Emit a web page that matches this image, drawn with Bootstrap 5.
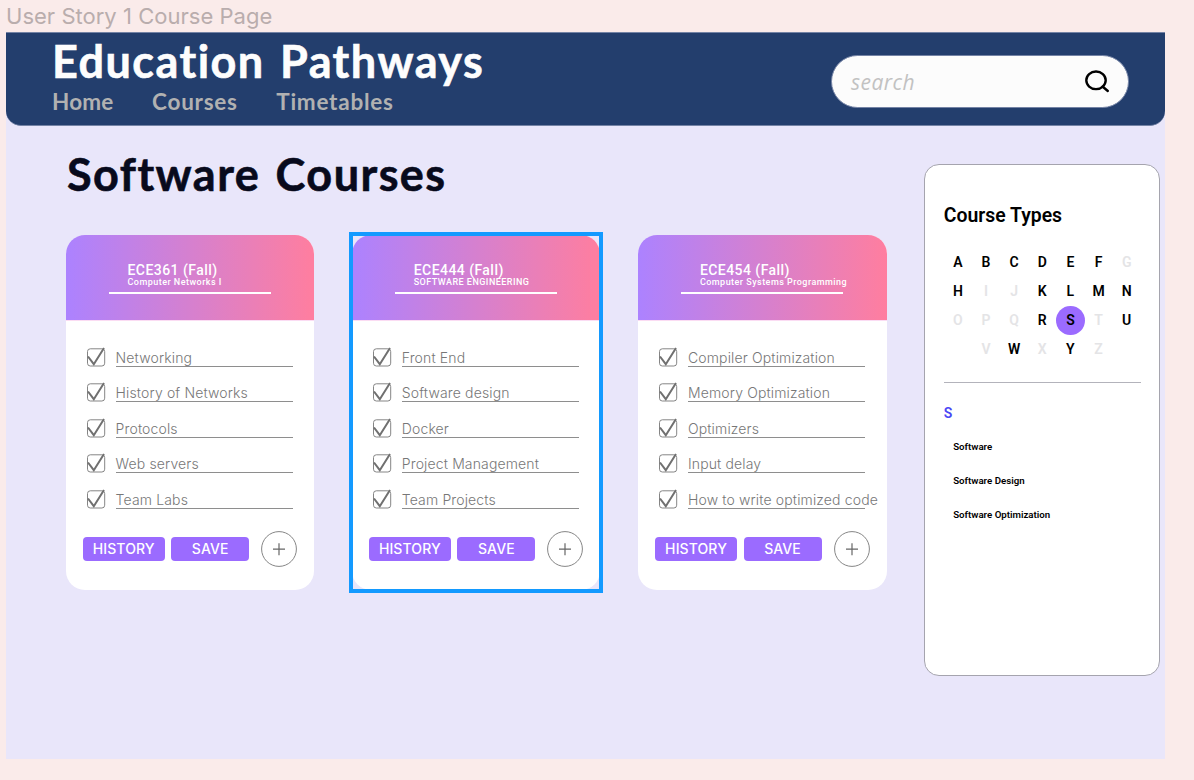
<!DOCTYPE html>
<html lang="en">
<head>
<meta charset="utf-8">
<meta name="viewport" content="width=device-width, initial-scale=1">
<title>Education Pathways</title>
<link href="https://cdn.jsdelivr.net/npm/bootstrap@5.3.0/dist/css/bootstrap.min.css" rel="stylesheet">
<style>
body{background:#faebea;font-family:Roboto,"Liberation Sans",sans-serif;height:780px;overflow:hidden;color:#000}
.frame-label{height:32px;padding-left:6px;font:400 22px/33px Inter,sans-serif;color:#b9adad;letter-spacing:.02px;white-space:nowrap}
.frame{width:1158.5px;height:727px;margin-left:6px;background:#e9e6fa}
.topbar{height:93.5px;background:#233e6d;border:1px solid #7483a5;border-width:1px 0;border-radius:0 0 15px 15px;padding:0 35.5px 0 46px}
.site-title,.page-title,.topbar .nav-link{font-family:Lato,"Noto Sans",sans-serif;font-weight:700;white-space:nowrap}
.site-title,.page-title{font-size:45px;letter-spacing:1.45px;word-spacing:3px;-webkit-text-stroke:.6px currentColor}
.site-title{line-height:55px;color:#fdfdfd;margin:1px 0 0}
.topbar .nav{gap:38.5px}
.topbar .nav-link{font-size:22.5px;line-height:26px;color:#b1b1b1;padding:0;letter-spacing:.75px}
.topbar .nav-link:first-child{letter-spacing:.2px}
.search{width:298px;height:53px;background:#fcfcfc;border:1px solid #7483a5;border-radius:27px;padding:0 18px 0 19px;margin-top:22px}
.search span{font:italic 400 21px/28px "Open Sans",sans-serif;color:#c2c2c2;letter-spacing:.45px}
.page-title{line-height:58px;color:#080a1c;margin:19px 0 32.5px 1px}
.content{padding-left:60px;gap:38px}
.cards{gap:38px}
.course{width:248.2px;height:355px;border-radius:19px;background:#fff;position:relative}
.course.selected::after{content:"";position:absolute;inset:-3px;border:4px solid #139aff}
.course-head{height:85.5px;border-radius:19px 19px 0 0;background:linear-gradient(90deg,#ac82ff,#ff7e9f);color:#fff;padding:27px 0 0 43px;border-bottom:1px solid #fbdcf3}
.course-head h2{font-size:14px;line-height:16px;font-weight:500;letter-spacing:.45px;margin:0 0 0 18.5px;white-space:nowrap}
.course-head p{font-size:9px;line-height:9px;font-weight:500;letter-spacing:.47px;margin:0 0 0 18.5px;white-space:nowrap}
.rule{width:162px;height:2px;background:#fff;margin-top:5px}
.checks{padding:21px 21px 0;margin:0;list-style:none}
.checks li{height:35.6px;display:flex;align-items:flex-start;gap:8.6px}
.checks svg{flex:none;margin-top:5px}
.checks span{width:177.5px;height:25px;border-bottom:1px solid #8e8e8e;font:300 14px/32px Inter,sans-serif;letter-spacing:.14px;color:#777;white-space:nowrap}
.actions{padding:11.5px 17px 0 16.7px}
.btn-act{height:24px;padding:0;border:0;border-radius:4px;background:#9b6bff;color:#fff;font:500 14px/24px Inter,sans-serif;letter-spacing:.1px}
.btn-hist{width:82px}.btn-save{width:78px;margin-left:6.5px}
.plus{margin-left:12px}
.types{width:236px;height:512px;margin-top:38.5px;margin-left:-.4px;border:1px solid #a5a4ae;border-radius:15px;background:#fff;padding:39.5px 18px 0}
.types h2{font-size:19.4px;line-height:22px;font-weight:600;margin:0 0 21.5px .6px}
.letters{display:grid;grid-template-columns:repeat(7,28.15px);grid-auto-rows:29px;font-size:14px;line-height:29px;text-align:center;margin-left:.6px}
.letters b{font-weight:600}
.letters i{font-style:normal;font-weight:600;color:#e4e4e6}
.letters .on{background:#9b6bff;border-radius:50%;width:28.5px;height:29px}
.divider{height:1px;background:#b3b3bb;margin:18px 0 20px 1px;width:197px}
.types h3{font-size:14px;line-height:20px;font-weight:600;color:#4a46f5;margin:0 0 7px .6px}
.types ul{font-size:9.7px;font-weight:600;line-height:34.2px;margin:0;padding-left:10px;list-style:none}
</style>
</head>
<body>
<svg width="0" height="0" class="d-none">
<symbol id="check" viewBox="0 0 20 20"><rect x=".5" y="1.8" width="17.2" height="17.2" rx="2.8" fill="none" stroke="#858585" stroke-width="1"/><path d="M1 9.5 6.8 17.2 17 1" fill="none" stroke="#707070" stroke-width="2"/></symbol>
<symbol id="plus" viewBox="0 0 36 36"><circle cx="18" cy="18" r="17.4" fill="none" stroke="#777" stroke-width=".9"/><path d="M12 18.2h12M18 12.2v12" stroke="#666" stroke-width="1.2"/></symbol>
</svg>
<div class="frame-label">User Story 1 Course Page</div>
<div class="frame">
<header class="topbar d-flex justify-content-between align-items-start">
<div><h1 class="site-title">Education Pathways</h1>
<nav class="nav"><a class="nav-link" href="#">Home</a><a class="nav-link" href="#">Courses</a><a class="nav-link" href="#">Timetables</a></nav></div>
<div class="search d-flex align-items-center justify-content-between"><span>search</span>
<svg width="26" height="24" viewBox="0 0 26 24" fill="none" stroke="#000" stroke-width="2.4"><ellipse cx="12" cy="10.3" rx="9.7" ry="8.8"/><path d="m18.5 16.5 5.3 4.5" stroke-linecap="round"/></svg></div>
</header>
<div class="content d-flex align-items-start">
<main>
<h1 class="page-title">Software Courses</h1>
<div class="cards d-flex">
<section class="course"><div class="course-head"><h2>ECE361 (Fall)</h2><p>Computer Networks I</p><div class="rule"></div></div>
<ul class="checks"><li><svg width="20" height="20"><use href="#check"/></svg><span>Networking</span></li><li><svg width="20" height="20"><use href="#check"/></svg><span>History of Networks</span></li><li><svg width="20" height="20"><use href="#check"/></svg><span>Protocols</span></li><li><svg width="20" height="20"><use href="#check"/></svg><span>Web servers</span></li><li><svg width="20" height="20"><use href="#check"/></svg><span>Team Labs</span></li></ul>
<div class="actions d-flex align-items-center"><button class="btn btn-act btn-hist">HISTORY</button><button class="btn btn-act btn-save">SAVE</button><svg class="plus" width="36" height="36"><use href="#plus"/></svg></div></section>
<section class="course selected"><div class="course-head"><h2>ECE444 (Fall)</h2><p>SOFTWARE ENGINEERING</p><div class="rule"></div></div>
<ul class="checks"><li><svg width="20" height="20"><use href="#check"/></svg><span>Front End</span></li><li><svg width="20" height="20"><use href="#check"/></svg><span>Software design</span></li><li><svg width="20" height="20"><use href="#check"/></svg><span>Docker</span></li><li><svg width="20" height="20"><use href="#check"/></svg><span>Project Management</span></li><li><svg width="20" height="20"><use href="#check"/></svg><span>Team Projects</span></li></ul>
<div class="actions d-flex align-items-center"><button class="btn btn-act btn-hist">HISTORY</button><button class="btn btn-act btn-save">SAVE</button><svg class="plus" width="36" height="36"><use href="#plus"/></svg></div></section>
<section class="course"><div class="course-head"><h2>ECE454 (Fall)</h2><p>Computer Systems Programming</p><div class="rule"></div></div>
<ul class="checks"><li><svg width="20" height="20"><use href="#check"/></svg><span>Compiler Optimization</span></li><li><svg width="20" height="20"><use href="#check"/></svg><span>Memory Optimization</span></li><li><svg width="20" height="20"><use href="#check"/></svg><span>Optimizers</span></li><li><svg width="20" height="20"><use href="#check"/></svg><span>Input delay</span></li><li><svg width="20" height="20"><use href="#check"/></svg><span>How to write optimized code</span></li></ul>
<div class="actions d-flex align-items-center"><button class="btn btn-act btn-hist">HISTORY</button><button class="btn btn-act btn-save">SAVE</button><svg class="plus" width="36" height="36"><use href="#plus"/></svg></div></section>
</div>
</main>
<aside class="types"><h2>Course Types</h2>
<div class="letters"><b>A</b><b>B</b><b>C</b><b>D</b><b>E</b><b>F</b><i>G</i><b>H</b><i>I</i><i>J</i><b>K</b><b>L</b><b>M</b><b>N</b><i>O</i><i>P</i><i>Q</i><b>R</b><b class="on">S</b><i>T</i><b>U</b><i></i><i>V</i><b>W</b><i>X</i><b>Y</b><i>Z</i></div>
<div class="divider"></div>
<h3>S</h3>
<ul><li>Software</li><li>Software Design</li><li>Software Optimization</li></ul>
</aside>
</div>
</div>
<script src="https://cdn.jsdelivr.net/npm/bootstrap@5.3.0/dist/js/bootstrap.bundle.min.js"></script>
</body>
</html>
